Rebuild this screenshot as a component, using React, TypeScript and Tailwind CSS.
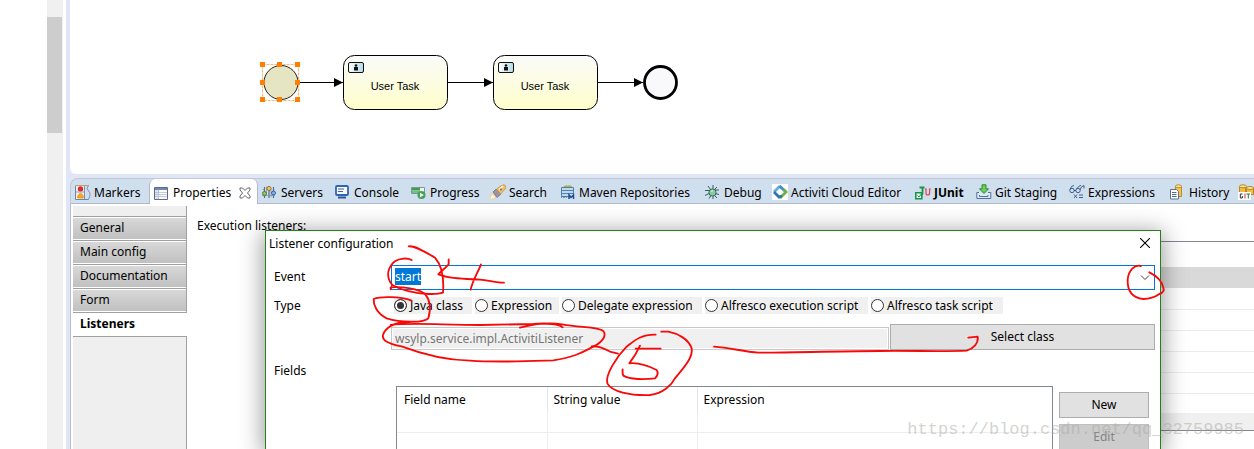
import { useEffect, useRef, useState } from "react";
import type { ReactNode } from "react";

function Icon({ children }: { children: ReactNode }) {
  return (
    <svg width="16" height="16" viewBox="0 0 16 16" fill="none" className="shrink-0" aria-hidden="true">
      {children}
    </svg>
  );
}

const icons: Record<string, ReactNode> = {
  markers: (
    <Icon>
      <path d="M.5 1.500v14h13" stroke="#6f83a8" />
      <path d="M.5 1.500h13" stroke="#b9a56a" />
      <path d="M1 2h8v13H1z" fill="#f4f0e2" />
      <path d="M9.500 1.500v14M13.500 1.500q-3 3 0 5.500t0 8.500" stroke="#7d8fb2" />
      <circle cx="5.500" cy="5" r="2.700" fill="#e02a30" />
      <path d="M2.500 14c0-3 1.500-4.500 3-4.500s3 1.500 3 4.500z" fill="#f5a623" stroke="#d98b1c" strokeWidth=".6" />
      <path d="M1 8h8" stroke="#8ea0c0" />
    </Icon>
  ),
  properties: (
    <Icon>
      <path d="M.5 2.500h13v12H.5z" fill="#fff" stroke="#5a6b8f" />
      <path d="M1 3h12v2H1z" fill="#7386ad" />
      <path d="M1 5h4v9H1z" fill="#dfe3ee" />
      <path d="M1 7.500h12M1 9.500h12M1 11.500h12M4.500 5v9" stroke="#b4bdd0" strokeWidth=".8" />
    </Icon>
  ),
  servers: (
    <Icon>
      <path d="M2.500 3v11M7 2v12M11.500 3v11" stroke="#5d6b7c" strokeWidth="1.200" />
      <path d="M.5 5.500h2M4.500 2.500v8M9 5v8M0 11.500h13" stroke="#8292a8" strokeWidth=".8" />
      <circle cx="2.500" cy="9.500" r="2" fill="#9bc46a" stroke="#4f7d35" />
      <circle cx="7" cy="4.500" r="2" fill="#f3cf55" stroke="#94742a" />
      <circle cx="11.500" cy="9" r="2" fill="#82b4e8" stroke="#3463a0" />
    </Icon>
  ),
  console: (
    <Icon>
      <rect x="1" y="2" width="12" height="9" rx="1" fill="#f5f9ff" stroke="#2f66b0" strokeWidth="1.800" />
      <path d="M3 5h6M3 7.500h5" stroke="#4a5f88" />
      <path d="M3 13.500h8" stroke="#2f5590" strokeWidth="1.800" />
    </Icon>
  ),
  progress: (
    <Icon>
      <path d="M.5 3.500h13v6H.5z" fill="#eef6ee" stroke="#7b94a4" />
      <path d="M1 4h8v2.500H1z" fill="#3f9e52" />
      <path d="M1 6.500h8V9H1z" fill="#75bf80" />
      <circle cx="10.500" cy="11" r="4" fill="#45a05a" />
      <path d="M9 8.700v4.600l3.800-2.300z" fill="#fff" />
    </Icon>
  ),
  search: (
    <Icon>
      <path d="M0 14.500l2-5 4 4-5 2z" fill="#fff7d5" stroke="#eccb7c" strokeWidth=".7" />
      <path d="M3 8l3-3 5 5-4 3.500z" fill="#9d92a0" stroke="#71697a" strokeWidth=".7" />
      <path d="M6.500 5l5-3.500q3-1.500 4 .3t-1 4L10.500 10z" fill="#f2bf6b" stroke="#c98d3a" strokeWidth=".8" />
      <path d="M9 5.500l4-3.500" stroke="#fff2cf" strokeWidth="1.500" />
      <circle cx="11" cy="5.500" r="1" fill="#4d77b3" />
    </Icon>
  ),
  maven: (
    <Icon>
      <path d="M4 3.500q1.500-2 3.500-.5 2-1.500 4 .5" stroke="#a8b52f" strokeWidth="2" />
      <path d="M1.500 3.500h12v9h-12z" fill="#bfd8f2" stroke="#557fae" />
      <path d="M2 6.500h11M2 9.500h11" stroke="#557fae" />
      <path d="M1 13.500l1.500-1 1.500 1 1.500-1 1.500 1" stroke="#3c6ca5" />
      <path d="M9 15v-4l2 2.500 2.500-2.500v4" stroke="#1e4f91" strokeWidth="1.500" />
    </Icon>
  ),
  debug: (
    <Icon>
      <path d="M3 2l3 4M8 1v4M12 3l-3 3M0 6.500h4M10 6h4M0 11.500l4-2M10 9.500l4 1M4 14.500l2-3M8 15v-3M12 14l-2-2" stroke="#34605f" />
      <circle cx="7.500" cy="8.500" r="3.600" fill="#8fc79f" stroke="#2f6a63" />
      <path d="M6 7.500q1-1 2-.5" stroke="#e9fbe8" />
    </Icon>
  ),
  cloud: (
    <Icon>
      <path d="M0 0h16v16H0z" fill="#fff" />
      <path d="M2 8l6-6" stroke="#67a9dc" strokeWidth="2.800" />
      <path d="M2 8l6 6" stroke="#2e74b5" strokeWidth="2.800" />
      <path d="M7.500 2l6.500 6" stroke="#3f8bc9" strokeWidth="2.800" />
      <path d="M8 14l6-6-2.500-2.500" stroke="#6cb33f" strokeWidth="2.800" />
      <path d="M7 13l3-1" stroke="#2e74b5" strokeWidth="2.500" />
    </Icon>
  ),
  junit: (
    <Icon>
      <path d="M4.500 3.500h5M7.500 3v6q0 2-2.500 2" stroke="#17944a" strokeWidth="1.800" />
      <path d="M.8 8.800h6v6h-6z" fill="#e8f7ec" stroke="#17944a" strokeWidth="1.600" />
      <path d="M2.500 11.500l1.500 1.500 3-4" stroke="#17944a" />
      <path d="M11 5v4q0 2 1.800 2t1.800-2V5M9.800 5h2M13.800 5h2" stroke="#dd4255" strokeWidth="1.200" />
    </Icon>
  ),
  staging: (
    <Icon>
      <path d="M3 8.500H.8v6h14v-6H12" fill="#dfe8f5" stroke="#51709e" />
      <path d="M3.500 11v1.500h8.500V11" stroke="#51709e" />
      <path d="M6 .8h4v4h2.500L8 9.500 3.500 4.800H6z" fill="#6fcf5a" stroke="#258a33" />
    </Icon>
  ),
  expressions: (
    <Icon>
      <circle cx="3" cy="6.500" r="2.200" stroke="#3f6188" />
      <circle cx="9" cy="6.500" r="2.200" stroke="#3f6188" />
      <path d="M1 5.500q1-4 4-4M7.500 5q3-4 4.500-3.500M5 6.500h2M11 6q1-4 4-4.500v3" stroke="#3f6188" />
      <path d="M5 10.500l3 3.500M8 10.500L5 14M10 11h4M10 13.500h4" stroke="#3f6188" />
    </Icon>
  ),
  history: (
    <Icon>
      <path d="M5.500 2.500v10h6v-10" fill="#f2c64e" stroke="#bb8a26" />
      <ellipse cx="8.500" cy="2.300" rx="3" ry="1.500" fill="#fbe6a1" stroke="#bb8a26" />
      <path d="M.5 5.500h6l2 2v7.500h-8z" fill="#fff" stroke="#5b6f96" />
      <path d="M2 8.500h4.500M2 10.500h4.500M2 12.500h4.500" stroke="#4e6591" />
    </Icon>
  ),
  git: (
    <Icon>
      <path d="M1.500 2.500v7h7v-7M7.500 3.500v7h8v-7" fill="#f0bd43" stroke="#b98724" />
      <ellipse cx="5" cy="2.300" rx="3.500" ry="1.500" fill="#fbe39a" stroke="#b98724" />
      <ellipse cx="12" cy="4" rx="3.500" ry="1.500" fill="#fbe39a" stroke="#b98724" />
      <path d="M0 8h13v8H0z" fill="#fff" />
      <path d="M4.500 10H2.300v4h2v-2" stroke="#333" />
      <path d="M7 9.500v5" stroke="#c33" />
      <path d="M8.500 10H12M10.300 10v4.500" stroke="#2a7a3a" />
    </Icon>
  ),
};

const tabs = [
  { icon: "markers", label: "Markers", width: "min-w-[78px]" },
  { icon: "properties", label: "Properties", width: "min-w-[109px]", active: true },
  { icon: "servers", label: "Servers", width: "min-w-[73px]" },
  { icon: "console", label: "Console", width: "min-w-[76px]" },
  { icon: "progress", label: "Progress", width: "min-w-[79px]" },
  { icon: "search", label: "Search", width: "min-w-[70px]" },
  { icon: "maven", label: "Maven Repositories", width: "min-w-[145px]" },
  { icon: "debug", label: "Debug", width: "min-w-[67px]" },
  { icon: "cloud", label: "Activiti Cloud Editor", width: "min-w-[143px]" },
  { icon: "junit", label: "JUnit", width: "min-w-[61px]", bold: true },
  { icon: "staging", label: "Git Staging", width: "min-w-[93px]" },
  { icon: "expressions", label: "Expressions", width: "min-w-[101px]" },
  { icon: "history", label: "History", width: "min-w-[68px]" },
  { icon: "git", label: "", width: "" },
];

const sections = ["General", "Main config", "Documentation", "Form"];

const listenerTypes = [
  { name: "Java class", width: "min-w-[78px]" },
  { name: "Expression", width: "min-w-[84px]" },
  { name: "Delegate expression", width: "min-w-[140px]" },
  { name: "Alfresco execution script", width: "min-w-[163px]" },
  { name: "Alfresco task script", width: "min-w-[132px]" },
];

function TaskNode({ x }: { x: number }) {
  return (
    <g transform={`translate(${x} 55)`}>
      <rect x=".5" y=".5" width="104" height="54" rx="11" fill="url(#task)" stroke="#000" />
      <rect x="5.500" y="7.500" width="15" height="10" rx="1.500" fill="url(#badge)" stroke="#111" />
      <circle cx="13" cy="10.500" r="1.300" fill="#111" />
      <path d="M11 12h4v3.500h-4z" fill="#111" />
      <text x="52" y="35" textAnchor="middle" fontSize="11" fontFamily="Liberation Sans, Arial, sans-serif">
        User Task
      </text>
    </g>
  );
}

function Diagram() {
  const handles = [
    [262, 64], [279, 64], [297, 64], [262, 82], [297, 82], [262, 99], [279, 99], [297, 99],
  ];
  return (
    <svg width="620" height="174" viewBox="70 0 620 174" className="block">
      <defs>
        <linearGradient id="task" x2="0" y2="1">
          <stop stopColor="#fafafa" />
          <stop offset="1" stopColor="#ffffcb" />
        </linearGradient>
        <linearGradient id="badge">
          <stop stopColor="#fff" />
          <stop offset="1" stopColor="#b5dbea" />
        </linearGradient>
      </defs>
      <path d="M298 82.500h45M448 82.500h45M598 82.500h45" stroke="#000" />
      <path d="M334 78l9 4.500-9 4.500zM484 78l9 4.500-9 4.500zM634 78l9 4.500-9 4.500z" fill="#000" />
      <circle cx="281" cy="82.500" r="17" fill="#e5e5c3" stroke="#222" />
      <rect x="262.500" y="64.500" width="36" height="36" fill="none" stroke="#ffb46b" strokeDasharray="3 1" />
      {handles.map(([x, y]) => (
        <rect key={`${x}-${y}`} x={x - 2} y={y - 2} width="5" height="5" fill="#ff8000" />
      ))}
      <TaskNode x={343} />
      <TaskNode x={493} />
      <circle cx="660.500" cy="82.500" r="16" fill="#f9f9fc" stroke="#000" strokeWidth="2.800" />
    </svg>
  );
}

function TabBar() {
  return (
    <div role="tablist" className="flex h-[26px] shrink-0 overflow-hidden rounded-tl-lg border-t border-l border-[#c3c8d4] bg-[#d0dfee]">
      {tabs.map((tab) => (
        <button
          key={tab.icon}
          role="tab"
          type="button"
          aria-label={tab.label || "Git Repositories"}
          aria-selected={!!tab.active}
          className={`flex shrink-0 items-center gap-[3px] border-[#b3b9ca] pt-[2px] pl-1 ${tab.width} ${
            tab.active ? "rounded-t-md border-x bg-white" : "border-b"
          }`}
        >
          {icons[tab.icon]}
          <span className={tab.bold ? "font-bold" : ""}>{tab.label}</span>
          {tab.active && (
            <svg width="12" height="12" viewBox="0 0 12 12" fill="none" stroke="#666" className="mr-[6px] ml-auto" aria-hidden="true">
              <path d="M1 1h2.500L6 3.500 8.500 1H11v2L8.500 6 11 9v2H8.500L6 8.500 3.500 11H1V9l2.500-3L1 3z" />
            </svg>
          )}
        </button>
      ))}
      <div className="flex-1 border-b border-[#b3b9ca]" />
    </div>
  );
}

function Sidebar() {
  return (
    <nav className="mt-[2px] flex w-[114px] shrink-0 flex-col">
      <div className="h-[11px] border-r border-b border-[#a0a0a0] bg-[#efefef]" />
      {sections.map((name) => (
        <button
          key={name}
          type="button"
          className="h-6 border-r border-b border-[#a0a0a0] bg-white py-px text-left"
        >
          <span className="block h-[21px] bg-linear-to-b from-[#d8d8d8] to-[#c0c0c0] pl-[7px] leading-[20px]">{name}</span>
        </button>
      ))}
      <button type="button" className="h-[23px] bg-white pb-[2px] pl-[7px] text-left font-bold">
        Listeners
      </button>
      <div className="flex-1 border-t border-r border-[#a0a0a0] bg-[#efefef]" />
    </nav>
  );
}

function ListenerDialog() {
  const eventRef = useRef<HTMLInputElement>(null);
  const [type, setType] = useState("Java class");
  useEffect(() => {
    eventRef.current?.focus();
    eventRef.current?.select();
  }, []);
  return (
    <section
      role="dialog"
      aria-label="Listener configuration"
      className="absolute top-[26px] right-[93px] bottom-0 left-[194px] flex flex-col border border-b-0 border-[#22801f] bg-white shadow-[0_4px_22px_2px_rgba(0,0,0,0.4)]"
    >
      <header className="flex h-[24px] shrink-0 items-center justify-between pr-[10px] pl-[3px]">
        <h2>Listener configuration</h2>
        <button type="button" aria-label="Close">
          <svg width="10" height="10" viewBox="0 0 10 10" stroke="#000" strokeWidth="1.100" aria-hidden="true">
            <path d="M0 0l10 10M10 0L0 10" />
          </svg>
        </button>
      </header>
      <div className="mt-[10px] grid grid-cols-[117px_1fr] pr-[5px] pl-2">
        <label htmlFor="event" className="leading-[24px]">Event</label>
        <div className="flex h-[25px] items-center border border-[#0078d7]">
          <input
            id="event"
            ref={eventRef}
            defaultValue="start"
            className="h-[19px] min-w-0 flex-1 bg-white pb-[2px] pl-[3px] caret-transparent outline-none selection:bg-[#0078d7] selection:text-white"
          />
          <button type="button" aria-label="Show events" className="px-1">
            <svg width="10" height="6" viewBox="0 0 10 6" fill="none" stroke="#444" aria-hidden="true">
              <path d="M1 .5l4 4 4-4" />
            </svg>
          </button>
        </div>
        <span className="mt-[7px] leading-[17px]">Type</span>
        <div className="mt-[7px] flex gap-[3px] pl-[3px]">
          {listenerTypes.map(({ name, width }) => (
            <label key={name} className={`flex h-[17px] shrink-0 items-center gap-[3px] bg-[#f0f0f0] ${width}`}>
              <input
                type="radio"
                name="type"
                checked={type === name}
                onChange={() => setType(name)}
                className="size-[13px] appearance-none rounded-full border border-[#333] bg-white checked:bg-[#333] checked:shadow-[inset_0_0_0_2px_white]"
              />
              {name}
            </label>
          ))}
        </div>
        <div className="col-start-2 mt-[10px] flex items-end">
          <input
            aria-label="Class name"
            readOnly
            value="wsylp.service.impl.ActivitiListener"
            className="h-[23px] min-w-0 flex-1 border border-[#c8c8c8] bg-[#f0f0f0] pl-[3px] text-[#767676] inset-ring inset-ring-white outline-none"
          />
          <button type="button" className="ml-px h-[26px] w-[265px] shrink-0 border border-[#adadad] bg-[#e1e1e1] pb-[2px]">
            Select class
          </button>
        </div>
      </div>
      <h3 className="mt-[11px] pl-2 leading-[20px]">Fields</h3>
      <div className="mt-[5px] flex min-h-0 flex-1 gap-[6px] overflow-hidden pr-[11px] pl-[130px]">
        <div className="min-w-0 flex-1 border border-b-0 border-[#828790]">
          <table className="w-full table-fixed border-collapse">
            <thead>
              <tr className="h-[25px] text-left">
                <th className="w-[150px] border-r border-[#e5e5e5] pl-[7px] font-normal">Field name</th>
                <th className="w-[150px] border-r border-[#e5e5e5] pl-[6px] font-normal">String value</th>
                <th className="pl-[6px] font-normal">Expression</th>
              </tr>
            </thead>
            <tbody>
              {[0, 1].map((row) => (
                <tr key={row} className="h-[20px] border-b border-[#ededed]">
                  <td className="border-r border-[#ebeef3]" />
                  <td className="border-r border-[#ebeef3]" />
                  <td />
                </tr>
              ))}
            </tbody>
          </table>
        </div>
        <div className="flex w-[90px] shrink-0 flex-col gap-[6px] pt-[6px]">
          <button type="button" className="h-[26px] shrink-0 border border-[#adadad] bg-[#e1e1e1] pb-[2px]">New</button>
          <button type="button" disabled className="h-[26px] shrink-0 border border-[#bfbfbf] bg-[#cccccc] pb-[2px] text-[#838383]">Edit</button>
        </div>
      </div>
    </section>
  );
}

function ListenerTable() {
  return (
    <div className="mt-[37px] ml-1 min-w-0 flex-1 self-start border-y border-[#828790]">
      <table className="w-full border-collapse">
        <tbody>
          <tr className="h-[25px]"><td /></tr>
          <tr className="h-[21px] bg-[#d9d9d9]"><td /></tr>
          {[0, 1, 2, 3, 4].map((row) => (
            <tr key={row} className="h-[21px] border-b border-[#ececec]"><td /></tr>
          ))}
          <tr className="h-[20px]"><td /></tr>
        </tbody>
      </table>
      <div className="h-[17px] bg-[#f0f0f0]" />
    </div>
  );
}

function Annotations() {
  return (
    <svg
      width="1254"
      height="449"
      viewBox="0 0 1254 449"
      className="pointer-events-none absolute top-0 left-0"
      fill="none"
      stroke="#f90808"
      strokeWidth="5.500"
      strokeLinecap="round"
      strokeLinejoin="round"
      aria-hidden="true"
    >
      <g transform="translate(360 225) scale(.3333)">
        <path d="M146 64C165 62 195 80 225 98C248 125 252 165 249 203C235 208 218 207 207 207" />
        <path d="M155 105C140 97 110 100 98 115C80 135 80 160 97 180C125 196 160 205 207 207" />
        <path d="M92 193V187C130 185 175 190 195 207C215 230 212 255 205 280C190 295 120 292 80 280C50 265 40 240 41 222C60 214 120 214 155 227" />
        <path d="M266 103V118C255 130 240 142 235 148L247 152C275 162 330 162 360 164C385 166 410 173 432 173M363 118C355 140 338 165 332 194" />
        <path d="M150 291C100 290 75 310 69 330C66 345 80 355 125 364C180 385 260 405 330 407C420 413 520 408 580 406C650 395 670 380 700 365C730 350 740 330 730 318C715 305 660 308 607 298C560 290 510 300 480 308M92 300C150 292 250 300 360 300L520 297C560 293 600 298 608 307" />
        <path d="M695 364C720 362 735 372 750 380L774 386" />
        <path d="M887 329C840 328 820 350 800 365C770 395 735 450 742 475C755 500 810 512 870 510C910 505 935 480 945 460C975 425 1000 395 995 370C985 340 950 325 925 320H904" />
        <path d="M902 371H827M840 362C832 380 820 400 808 415C835 412 870 425 890 435C897 445 890 455 885 460C855 464 810 464 790 452C786 445 788 438 788 433" />
      </g>
      <g transform="translate(680 225) scale(.3333)">
        <path d="M102 365C150 368 190 380 235 383C330 384 450 378 600 378C700 377 800 380 860 377C880 370 897 355 893 335L865 338" />
      </g>
      <g transform="translate(970 225) scale(.3333)">
        <path d="M513 123C495 118 475 135 473 165C472 195 485 218 520 222C550 222 560 213 568 207C580 205 583 195 580 188C575 165 555 150 538 142" />
      </g>
    </svg>
  );
}

export default function App() {
  return (
    <div className="relative flex h-screen overflow-hidden bg-white font-['Noto_Sans','Open_Sans',sans-serif] text-[12px] leading-[17px] text-black">
      <aside className="flex w-[66px] shrink-0 justify-end pr-[3px]">
        <div className="w-4 bg-[#f0f0f0] pt-[17px]">
          <div className="h-[116px] w-[15px] bg-[#cdcdcd]" />
        </div>
      </aside>
      <main className="flex min-w-0 flex-1 flex-col bg-[#e1e6f6] pl-1">
        <div className="h-[174px] shrink-0 overflow-hidden rounded-bl-md bg-white">
          <Diagram />
        </div>
        <div className="mt-1 flex min-h-0 flex-1 flex-col">
          <TabBar />
          <div className="relative flex min-h-0 flex-1 border-l border-[#b9bfce] bg-white pl-[2px]">
            <Sidebar />
            <span className="mt-[13px] shrink-0 pl-[10px]">Execution listeners:</span>
            <ListenerTable />
            <ListenerDialog />
          </div>
        </div>
      </main>
      <Annotations />
      <p className="pointer-events-none absolute right-[10px] bottom-[9px] font-['Liberation_Mono',monospace] text-[17px] leading-[20px] text-[#a9a9a0]/50">
        https://blog.csdn.net/qq_32759985
      </p>
    </div>
  );
}
